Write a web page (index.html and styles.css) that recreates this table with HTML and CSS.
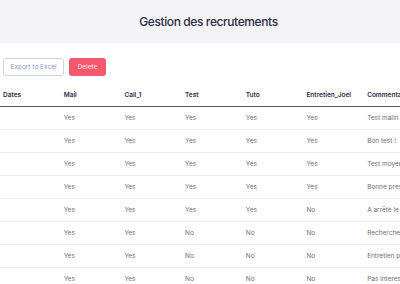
FILE: index.html
```html
<!DOCTYPE html>
<html lang="fr">
<head>
<meta charset="utf-8">
<title>Gestion des recrutements</title>
<link rel="stylesheet" href="styles.css">
</head>
<body>
<header class="banner">
  <h1 class="title">Gestion des recrutements</h1>
</header>
<div class="toolbar">
  <button class="btn btn-outline">Export to Excel</button>
  <button class="btn btn-danger">Delete</button>
</div>
<table class="grid">
  <colgroup>
    <col class="c"><col class="c"><col class="c"><col class="c"><col class="c"><col class="c"><col class="c-wide">
  </colgroup>
  <thead>
    <tr><th>Dates</th><th>Mail</th><th>Call_1</th><th>Test</th><th>Tuto</th><th>Entretien_Joel</th><th>Commentaires</th></tr>
  </thead>
  <tbody>
    <tr><td></td><td>Yes</td><td>Yes</td><td>Yes</td><td>Yes</td><td>Yes</td><td>Test malin</td></tr>
    <tr><td></td><td>Yes</td><td>Yes</td><td>Yes</td><td>Yes</td><td>Yes</td><td>Bon test !</td></tr>
    <tr><td></td><td>Yes</td><td>Yes</td><td>Yes</td><td>Yes</td><td>Yes</td><td>Test moyen</td></tr>
    <tr><td></td><td>Yes</td><td>Yes</td><td>Yes</td><td>Yes</td><td>Yes</td><td>Bonne presentation</td></tr>
    <tr><td></td><td>Yes</td><td>Yes</td><td>Yes</td><td>Yes</td><td>No</td><td>A arrêté le test</td></tr>
    <tr><td></td><td>Yes</td><td>Yes</td><td>No</td><td>No</td><td>No</td><td>Recherche un CDI</td></tr>
    <tr><td></td><td>Yes</td><td>Yes</td><td>No</td><td>No</td><td>No</td><td>Entretien pas concluant</td></tr>
    <tr><td></td><td>Yes</td><td>Yes</td><td>No</td><td>No</td><td>No</td><td>Pas interessé</td></tr>
  </tbody>
</table>
</body>
</html>
```
FILE: styles.css
```css
html, body {
  margin: 0;
  padding: 0;
  background: #ffffff;
  overflow: hidden;
  font-family: "Inter", "Open Sans", sans-serif;
}

.banner {
  height: 43px;
  background: #f4f4f8;
  display: flex;
  align-items: center;
  justify-content: center;
  padding-left: 17px;
}

.title {
  margin: 0;
  font-size: 12px;
  letter-spacing: -0.4px;
  font-weight: 500;
  color: #2b2c45;
}

.toolbar {
  display: flex;
  gap: 5px;
  padding: 15px 0 0 3px;
  height: 18px;
}

.btn {
  height: 18px;
  border-radius: 3px;
  font-family: inherit;
  font-size: 6.5px;
  padding: 0;
  cursor: pointer;
}

.btn-outline {
  width: 61px;
  background: #ffffff;
  border: 1px solid #cdd2e8;
  color: #8a93c8;
}

.btn-danger {
  width: 37px;
  background: #f4586c;
  border: none;
  color: #fde5e8;
}

.grid {
  margin-top: 8px;
  border-collapse: collapse;
  table-layout: fixed;
  width: 484px;
}

.c { width: 60.7px; }
.c-wide { width: 120px; }

.grid th {
  height: 22px;
  padding: 0 3px;
  text-align: left;
  font-size: 6.5px;
  font-weight: 600;
  color: #2b2c45;
  border-bottom: 1.5px solid #55565f;
}

.grid td {
  height: 22px;
  padding: 0 3px;
  font-size: 6.5px;
  color: #6b6d78;
  border-bottom: 1px solid #ececf0;
  white-space: nowrap;
  overflow: hidden;
}
```
